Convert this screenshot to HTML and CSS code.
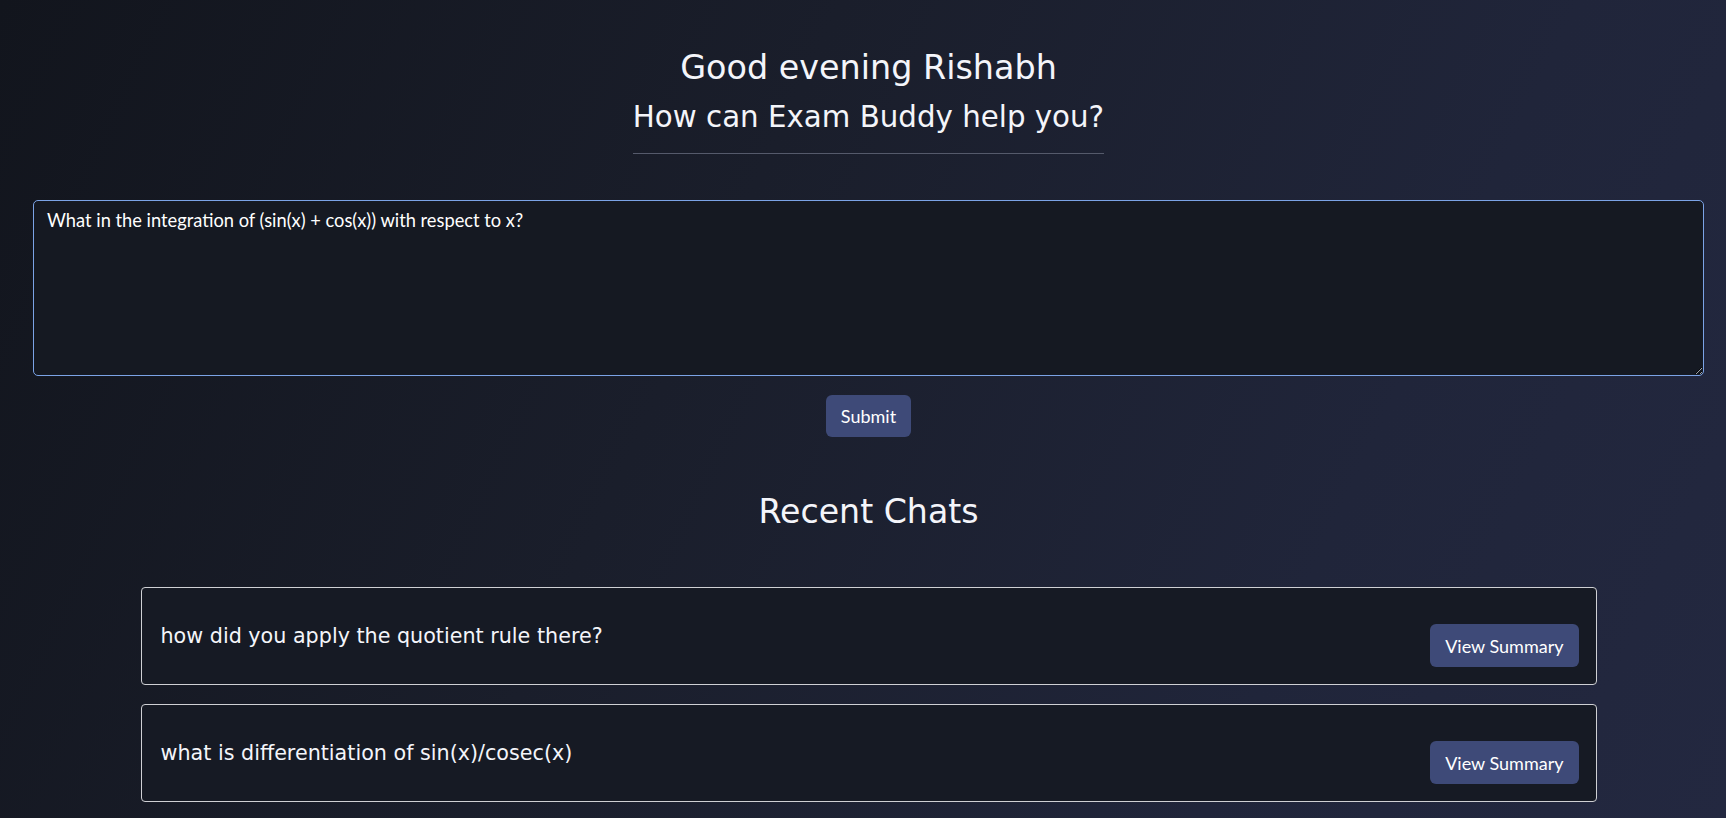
FILE: index.html
```html
<!DOCTYPE html>
<html lang="en">
<head>
<meta charset="utf-8">
<title>Exam Buddy</title>
<link rel="stylesheet" href="styles.css">
</head>
<body>
<main class="page">
  <header class="greeting">
    <h1 class="greeting-title">Good evening Rishabh</h1>
    <h2 class="greeting-sub">How can Exam Buddy help you?</h2>
  </header>

  <section class="ask">
    <textarea class="ask-input" autofocus>What in the integration of (sin(x) + cos(x)) with respect to x?</textarea>
    <button class="btn btn-submit" type="button">Submit</button>
  </section>

  <section class="recent">
    <h2 class="recent-title">Recent Chats</h2>
    <div class="chat-list">
      <article class="chat-card">
        <h3 class="chat-text">how did you apply the quotient rule there?</h3>
        <button class="btn btn-summary" type="button">View Summary</button>
      </article>
      <article class="chat-card">
        <h3 class="chat-text">what is differentiation of sin(x)/cosec(x)</h3>
        <button class="btn btn-summary" type="button">View Summary</button>
      </article>
    </div>
  </section>
</main>
</body>
</html>
```

FILE: styles.css
```css
* {
  box-sizing: border-box;
}

html, body {
  margin: 0;
  padding: 0;
  height: 100%;
}

body {
  background: linear-gradient(115deg, #12151d 0%, #1a1e2b 40%, #20253a 75%, #232840 100%);
  color: #f4f5fa;
  font-family: "DejaVu Sans", sans-serif;
  overflow: hidden;
}

.page {
  display: flex;
  flex-direction: column;
  align-items: center;
  padding: 48px 22px 0 33px;
}

.greeting {
  display: flex;
  flex-direction: column;
  align-items: center;
  padding-bottom: 19px;
  border-bottom: 1px solid #555a6b;
}

.greeting-title {
  margin: 0;
  font-family: "DejaVu Sans", sans-serif;
  font-size: 33.4px;
  line-height: 40px;
  font-weight: 400;
  white-space: nowrap;
}

.greeting-sub {
  margin: 13px 0 0;
  font-family: "DejaVu Sans", sans-serif;
  font-size: 29.3px;
  line-height: 33px;
  font-weight: 400;
  white-space: nowrap;
}

.ask {
  width: 100%;
  margin-top: 46px;
  display: flex;
  flex-direction: column;
  align-items: center;
}

.ask-input {
  display: block;
  width: 100%;
  height: 176px;
  margin: 0;
  padding: 8px 13px;
  background: #151922;
  color: #ffffff;
  caret-color: #ffffff;
  border: 1px solid #7ba3e6;
  border-radius: 5px;
  outline: none;
  font-family: Lato, "Open Sans", sans-serif;
  font-size: 18.3px;
  line-height: normal;
  resize: both;
}

.btn {
  border: none;
  color: #ffffff;
  background: #3e4a78;
  font-family: Lato, "Open Sans", sans-serif;
  cursor: pointer;
}

.btn-submit {
  margin-top: 19px;
  height: 42px;
  padding: 0 15px;
  border-radius: 6px;
  font-size: 18px;
}

.recent {
  width: 100%;
  display: flex;
  flex-direction: column;
  align-items: center;
  margin-top: 55px;
}

.recent-title {
  margin: 0;
  font-family: "DejaVu Sans", sans-serif;
  font-size: 33.2px;
  line-height: 40px;
  font-weight: 400;
}

.chat-list {
  margin-top: 55px;
  width: 1456px;
  display: flex;
  flex-direction: column;
  gap: 19px;
}

.chat-card {
  display: flex;
  align-items: center;
  justify-content: space-between;
  height: 98px;
  padding: 0 17px 0 19px;
  background: #161a24;
  border: 1px solid #cfd0d4;
  border-radius: 4px;
}

.chat-text {
  margin: 0;
  font-family: "DejaVu Sans", sans-serif;
  font-size: 20.7px;
  line-height: 26px;
  font-weight: 400;
}

.btn-summary {
  margin-top: 19px;
  height: 43px;
  padding: 0 15px;
  border-radius: 6px;
  font-size: 18px;
}
```
